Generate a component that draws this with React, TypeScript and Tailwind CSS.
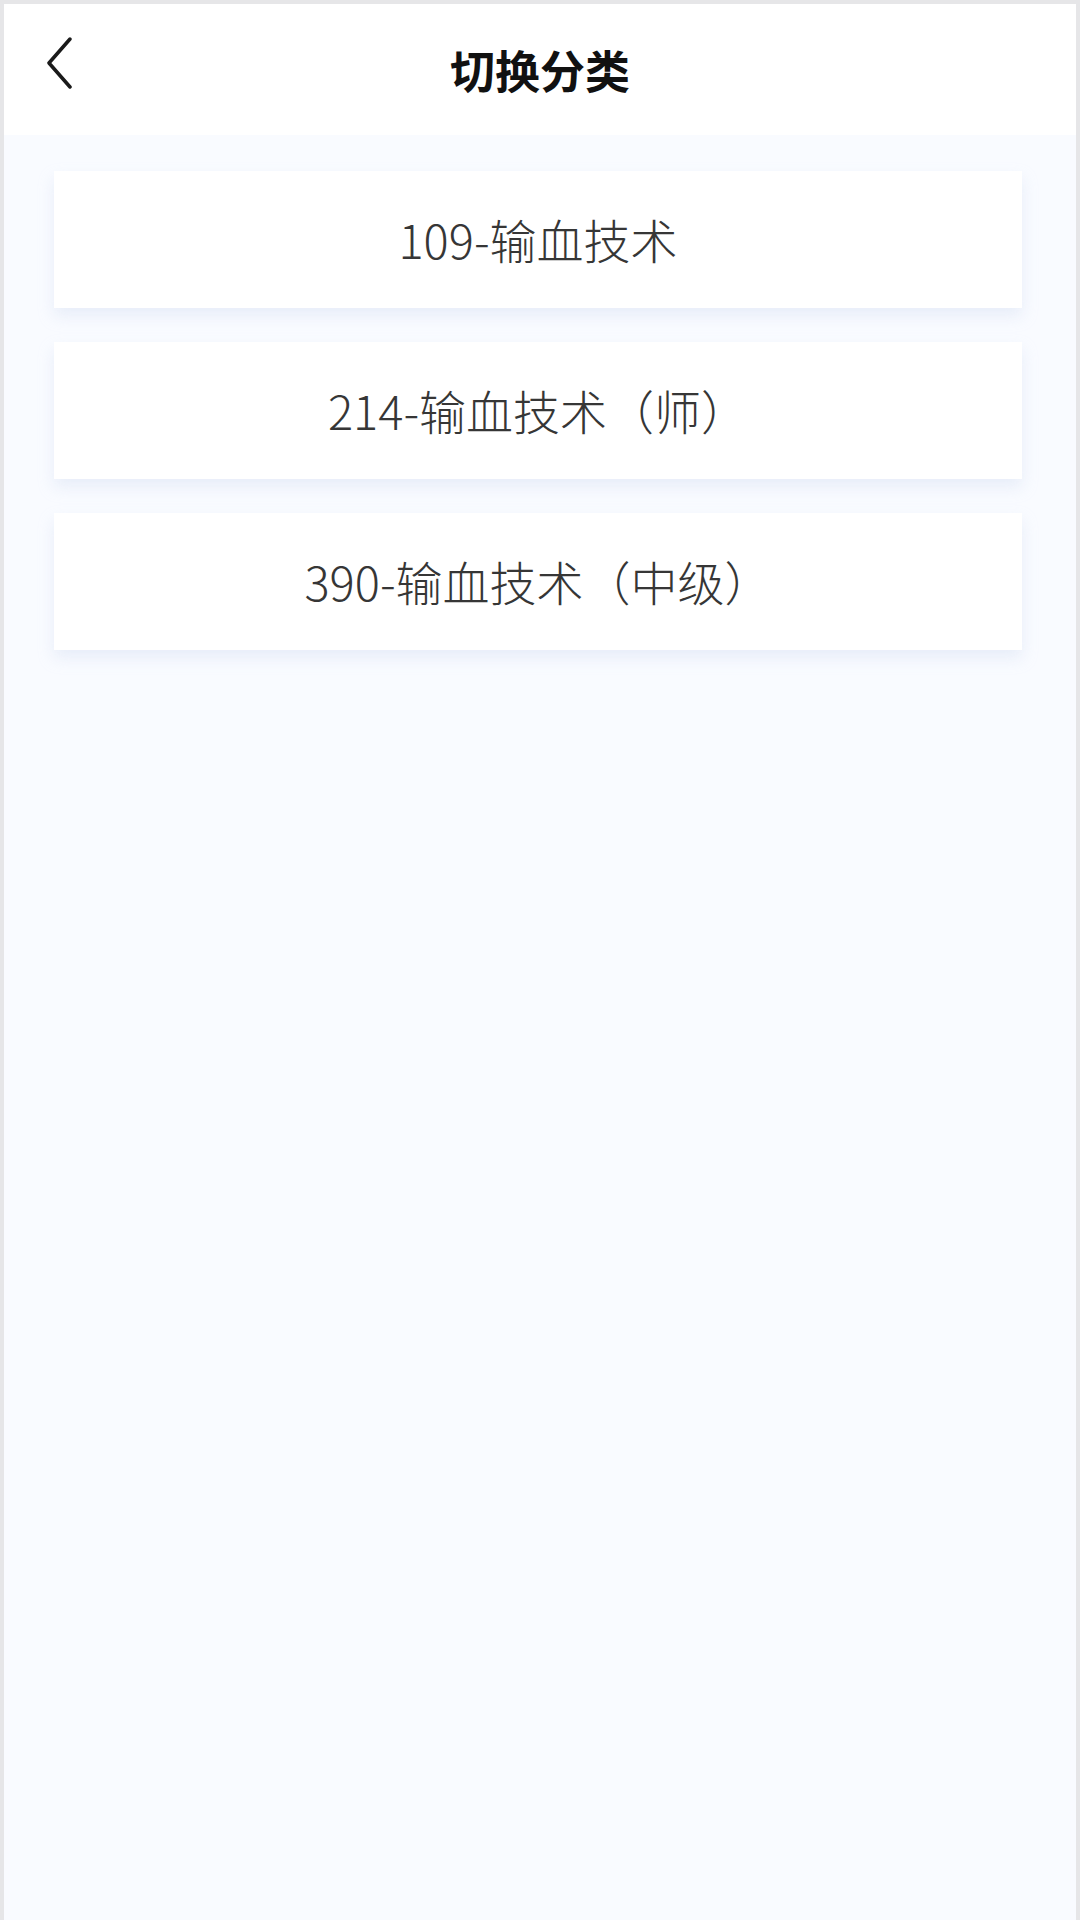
import React from 'react';

const categories = ['109-输血技术', '214-输血技术（师）', '390-输血技术（中级）'];

// Back chevron in the header
function BackIcon() {
  return (
    <svg width="28" height="52" viewBox="0 0 28 52" fill="none">
      <path d="M25 2 L4 26 L25 50" stroke="#1a1a1a" strokeWidth="3.5" strokeLinecap="round" strokeLinejoin="round" />
    </svg>
  );
}

function CategoryCard({ label }: { label: string }) {
  return (
    <button className="flex h-[137px] w-full items-center justify-center bg-white text-[47px] font-light text-[#363636] shadow-[0_8px_14px_rgba(225,232,246,0.7)]">
      {label}
    </button>
  );
}

export default function App() {
  return (
    <div
      className="flex min-h-[1920px] w-[1080px] flex-col border-x-[4px] border-t-[4px] border-[#e6e6e8] bg-[#f9fbff]"
      style={{ fontFamily: '"Noto Sans CJK SC", "Noto Sans", sans-serif' }}
    >
      {/* Header */}
      <div className="relative flex h-[131px] items-center justify-center bg-white">
        <div className="absolute left-[41px] top-[33px]">
          <BackIcon />
        </div>
        <h1 className="text-[45px] font-bold text-[#111111]">切换分类</h1>
      </div>

      {/* Category list */}
      <div className="flex flex-col gap-[34px] pl-[50px] pr-[54px] pt-[36px]">
        {categories.map((c) => (
          <CategoryCard key={c} label={c} />
        ))}
      </div>
    </div>
  );
}
